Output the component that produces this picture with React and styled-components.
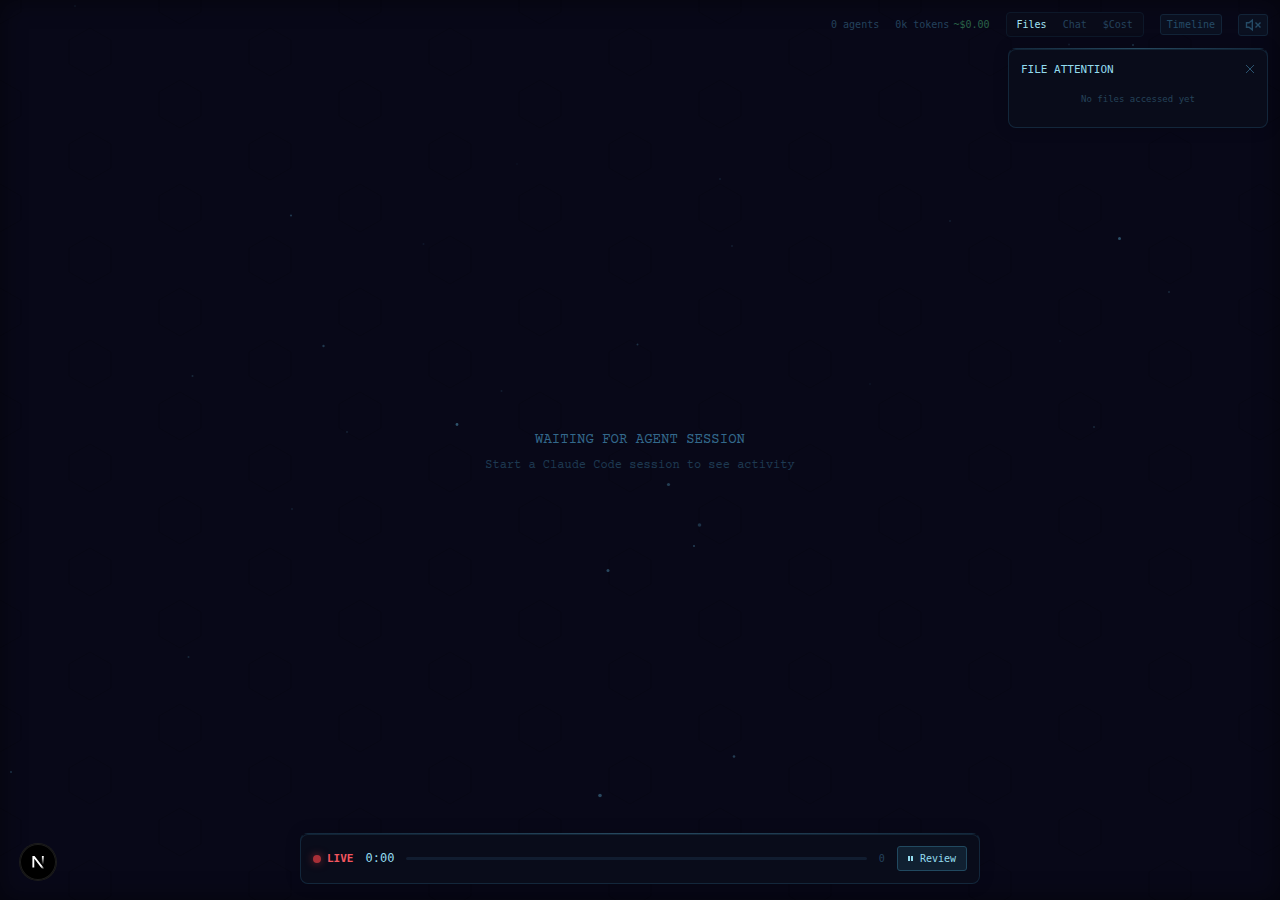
import React, { useState } from 'react';
import styled, { createGlobalStyle } from 'styled-components';

const GlobalStyle = createGlobalStyle`
    * {
        box-sizing: border-box;
    }

    body {
        margin: 0;
        background: #080818;
        font-family: "DejaVu Sans Mono", monospace;
        font-size: 10px;
        line-height: 15px;
    }

    button {
        font: inherit;
        cursor: pointer;
    }
`;

const Page = styled.div`
    position: relative;
    min-height: 100vh;
    display: grid;
    grid-template-rows: 1fr auto 1fr;
`;

const Sky = styled.svg`
    position: absolute;
    inset: 0;
    width: 100%;
    height: 100%;
`;

const Vignette = styled.div`
    position: absolute;
    inset: 0;
    box-shadow: inset 0 0 24px rgba(0, 0, 0, 0.5);
`;

const Top = styled.div`
    position: relative;
    display: flex;
    flex-direction: column;
    align-items: flex-end;
    gap: 11px;
    padding: 12px;
`;

const Toolbar = styled.header`
    display: flex;
    align-items: center;
    gap: 16px;
    color: #24425c;
`;

const Usage = styled.div`
    display: flex;
    gap: 4px;
`;

const Price = styled.span`
    color: #2a6348;
`;

const Tabs = styled.nav`
    display: flex;
    padding: 2px;
    background: #090b19;
    border: 1px solid #0d1829;
    border-radius: 4px;
`;

const Tab = styled.button`
    padding: 2px 8px;
    border: none;
    background: none;
    color: ${(props) => (props.$active ? '#a3e3f4' : '#24425c')};
`;

const ToolButton = styled.button`
    display: flex;
    align-items: center;
    padding: 2px 6px;
    color: #254b66;
    background: #0a1020;
    border: 1px solid #122438;
    border-radius: 3px;
`;

const Card = styled.section`
    background:
        linear-gradient(90deg, #13273b, #27495f, #13273b) top / 100% 1px no-repeat border-box,
        #090c1a;
    border: 1px solid #13273b;
    border-top-color: transparent;
    border-radius: 8px;
    box-shadow: inset 0 1px 0 #122334, 0 0 16px rgba(0, 0, 0, 0.15);
`;

const FilePanel = styled(Card)`
    width: 260px;
    padding: 12px;
`;

const PanelHead = styled.div`
    display: flex;
    align-items: center;
    justify-content: space-between;
    height: 16px;
`;

const PanelTitle = styled.h2`
    margin: 0;
    font-size: 11px;
    font-weight: 400;
    color: #93dbee;
`;

const CloseButton = styled.button`
    display: flex;
    padding: 0;
    border: none;
    background: none;
    color: #2b5470;
`;

const Empty = styled.p`
    margin: 0;
    padding: 16px 0 10px;
    font-size: 9px;
    line-height: 12px;
    text-align: center;
    color: #254359;
`;

const Waiting = styled.main`
    position: relative;
    padding-top: 6px;
    text-align: center;
    font-family: "Courier Prime", "Courier New", monospace;
    line-height: 26px;
`;

const WaitingTitle = styled.h1`
    margin: 0;
    font-size: 14px;
    font-weight: 400;
    color: #33698c;
`;

const WaitingHint = styled.p`
    margin: 0;
    font-size: 12px;
    color: #1e3a52;
`;

const Bottom = styled.footer`
    position: relative;
    display: flex;
    align-items: flex-end;
    justify-content: center;
    padding: 16px;
`;

const Player = styled(Card)`
    display: flex;
    align-items: center;
    gap: 12px;
    width: 100%;
    max-width: 680px;
    padding: 12px;
`;

const Live = styled.div`
    display: flex;
    align-items: center;
    gap: 6px;
    font-size: 11px;
    font-weight: 700;
    color: #f2565f;
`;

const LiveDot = styled.span`
    width: 8px;
    height: 8px;
    border-radius: 50%;
    background: #a82f37;
    box-shadow: 0 0 8px rgba(255, 68, 68, 0.5);
`;

const Clock = styled.span`
    font-size: 12px;
    color: #93dbee;
`;

const Track = styled.div`
    flex: 1;
    height: 3px;
    border-radius: 2px;
    background: #111d30;
`;

const Count = styled.span`
    color: #24425c;
`;

const ReviewButton = styled.button`
    display: flex;
    align-items: center;
    gap: 6px;
    padding: 4px 10px;
    color: #93dbee;
    background: #102031;
    border: 1px solid #214960;
    border-radius: 3px;
`;

const DevBadge = styled.button`
    position: fixed;
    left: 20px;
    bottom: 20px;
    width: 36px;
    height: 36px;
    padding: 0;
    border: none;
    border-radius: 50%;
    background: #000;
    box-shadow: 0 0 0 1px #1c1c1c, inset 0 0 0 1px #1c1c1c;
`;

// x, y, radius, opacity
const stars = [
    [75, 6, 1, 0.15], [517, 164, 1, 0.08], [720, 179, 1, 0.2], [291, 215.5, 1.1, 0.45],
    [950, 221, 1, 0.2], [1119.5, 238.5, 1.5, 0.65], [423.5, 244, 1, 0.15], [732, 246, 1, 0.2],
    [1169, 292, 1, 0.3], [637.5, 344.5, 1, 0.4], [323.5, 346, 1.2, 0.45], [192.5, 376, 1, 0.3],
    [870, 384, 1, 0.1], [501.5, 391, 1, 0.2], [457, 424.5, 1.4, 0.7], [1094, 427, 1, 0.3],
    [347, 432, 1, 0.25], [668.5, 484.5, 1.6, 0.5], [292, 509, 1, 0.2], [699.5, 525, 1.8, 0.4],
    [694, 546, 1.1, 0.5], [608, 570.5, 1.5, 0.6], [188.5, 657, 1, 0.3], [734, 756.5, 1.3, 0.5],
    [11, 772, 1.1, 0.4], [600, 795.5, 1.8, 0.6], [1133, 45, 1, 0.4], [1069, 44.5, 1, 0.2],
    [1060, 341, 1, 0.08],
];

const hex = 'l21 12v24l-21 12l-21 -12v-24z';

function Background() {
    return (
        <Sky aria-hidden="true">
            <defs>
                <pattern id="hexes" width="180" height="104" patternUnits="userSpaceOnUse">
                    <path
                        d={`M0 -24${hex}M180 -24${hex}M0 80${hex}M180 80${hex}M90 28${hex}`}
                        fill="none"
                        stroke="#000"
                        strokeOpacity="0.15"
                    />
                </pattern>
            </defs>
            <rect width="100%" height="100%" fill="url(#hexes)" />
            {stars.map(([x, y, r, o]) => (
                <circle key={`${x}-${y}`} cx={x} cy={y} r={r} fill="#3f7390" opacity={o} />
            ))}
        </Sky>
    );
}

function MuteIcon() {
    return (
        <svg width="16" height="16" viewBox="0 0 16 16" fill="none" stroke="currentColor" strokeWidth="1.4">
            <path d="M1.5 5.8H4L7.3 3.2v9.6L4 10.2H1.5z" />
            <path d="M10.5 5.5l5 5M15.5 5.5l-5 5" />
        </svg>
    );
}

function NextLogo() {
    return (
        <svg width="36" height="36" viewBox="0 0 36 36" fill="none" strokeWidth="1.86">
            <defs>
                <linearGradient id="diag" x1="9.96" y1="11.12" x2="13.3" y2="15.2" gradientUnits="userSpaceOnUse">
                    <stop stopColor="#fff" />
                    <stop offset="1" stopColor="#fff" stopOpacity="0" />
                </linearGradient>
                <linearGradient id="stem" x1="11.8" y1="1.4" x2="11.8" y2="9.6" gradientUnits="userSpaceOnUse">
                    <stop stopColor="#fff" />
                    <stop offset="1" stopColor="#fff" stopOpacity="0" />
                </linearGradient>
                <clipPath id="logoBox">
                    <rect x="0" y="1" width="13" height="12.6" />
                </clipPath>
            </defs>
            <g transform="translate(11 11)" clipPath="url(#logoBox)">
                <path d="M13.3 15.2L2.34 1V12.6" stroke="url(#diag)" />
                <path d="M11.825 1V13.1" stroke="url(#stem)" />
            </g>
        </svg>
    );
}

export default function App() {
    const [tab, setTab] = useState('Files');
    const tabs = ['Files', 'Chat', '$Cost'];

    return (
        <Page>
            <GlobalStyle />
            <Background />
            <Vignette />
            <Top>
                <Toolbar>
                    <span>0 agents</span>
                    <Usage>
                        <span>0k tokens</span>
                        <Price>~$0.00</Price>
                    </Usage>
                    <Tabs>
                        {tabs.map((name) => (
                            <Tab key={name} $active={name === tab} onClick={() => setTab(name)}>{name}</Tab>
                        ))}
                    </Tabs>
                    <ToolButton>Timeline</ToolButton>
                    <ToolButton aria-label="Unmute">
                        <MuteIcon />
                    </ToolButton>
                </Toolbar>
                <FilePanel>
                    <PanelHead>
                        <PanelTitle>FILE ATTENTION</PanelTitle>
                        <CloseButton aria-label="Close">
                            <svg width="10" height="10" viewBox="0 0 10 10" stroke="currentColor">
                                <path d="M1 1l8 8M9 1l-8 8" />
                            </svg>
                        </CloseButton>
                    </PanelHead>
                    <Empty>No files accessed yet</Empty>
                </FilePanel>
            </Top>
            <Waiting>
                <WaitingTitle>WAITING FOR AGENT SESSION</WaitingTitle>
                <WaitingHint>Start a Claude Code session to see activity</WaitingHint>
            </Waiting>
            <Bottom>
                <Player>
                    <Live>
                        <LiveDot />
                        LIVE
                    </Live>
                    <Clock>0:00</Clock>
                    <Track />
                    <Count>0</Count>
                    <ReviewButton>
                        <svg width="6" height="6" viewBox="0 0 6 6" fill="currentColor">
                            <path d="M0 0h2v5h-2zM3 0h2v5h-2z" />
                        </svg>
                        Review
                    </ReviewButton>
                </Player>
            </Bottom>
            <DevBadge aria-label="Open Next.js Dev Tools">
                <NextLogo />
            </DevBadge>
        </Page>
    );
}
